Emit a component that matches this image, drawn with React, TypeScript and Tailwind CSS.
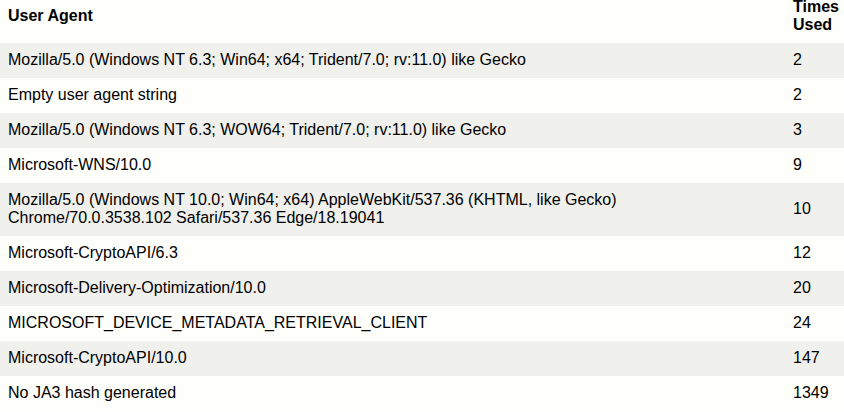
import React from "react";

const rows: [string, string][] = [
  ["Mozilla/5.0 (Windows NT 6.3; Win64; x64; Trident/7.0; rv:11.0) like Gecko", "2"],
  ["Empty user agent string", "2"],
  ["Mozilla/5.0 (Windows NT 6.3; WOW64; Trident/7.0; rv:11.0) like Gecko", "3"],
  ["Microsoft-WNS/10.0", "9"],
  [
    "Mozilla/5.0 (Windows NT 10.0; Win64; x64) AppleWebKit/537.36 (KHTML, like Gecko) Chrome/70.0.3538.102 Safari/537.36 Edge/18.19041",
    "10",
  ],
  ["Microsoft-CryptoAPI/6.3", "12"],
  ["Microsoft-Delivery-Optimization/10.0", "20"],
  ["MICROSOFT_DEVICE_METADATA_RETRIEVAL_CLIENT", "24"],
  ["Microsoft-CryptoAPI/10.0", "147"],
  ["No JA3 hash generated", "1349"],
];

export default function App() {
  return (
    <div className="w-[844px] h-[412px] overflow-hidden bg-[#fefefb] text-black font-['Liberation_Sans',Arial,sans-serif] text-[16px] leading-[18px]">
      <table className="w-full table-fixed border-collapse -mt-[10px]">
        <colgroup>
          <col className="w-[785px]" />
          <col />
        </colgroup>
        <thead>
          <tr className="border-b border-[#fefefb]">
            <th className="text-left font-bold px-2 py-2 align-middle">User Agent</th>
            <th className="text-left font-bold px-2 py-2 align-middle">Times Used</th>
          </tr>
        </thead>
        <tbody>
          {rows.map(([ua, n], i) => (
            <tr
              key={i}
              className={
                i % 2 === 0
                  ? "bg-[#f0f0ed] border-b border-[#f0f0ed]"
                  : "bg-[#fefefb] border-b border-[#fefefb]"
              }
            >
              <td className="px-2 py-2 align-middle">
                {i === 4 ? (
                  <>
                    Mozilla/5.0 (Windows NT 10.0; Win64; x64) AppleWebKit/537.36 (KHTML, like Gecko)
                    <br />
                    Chrome/70.0.3538.102 Safari/537.36 Edge/18.19041
                  </>
                ) : (
                  ua
                )}
              </td>
              <td className="px-2 py-2 align-middle">{n}</td>
            </tr>
          ))}
        </tbody>
      </table>
    </div>
  );
}
